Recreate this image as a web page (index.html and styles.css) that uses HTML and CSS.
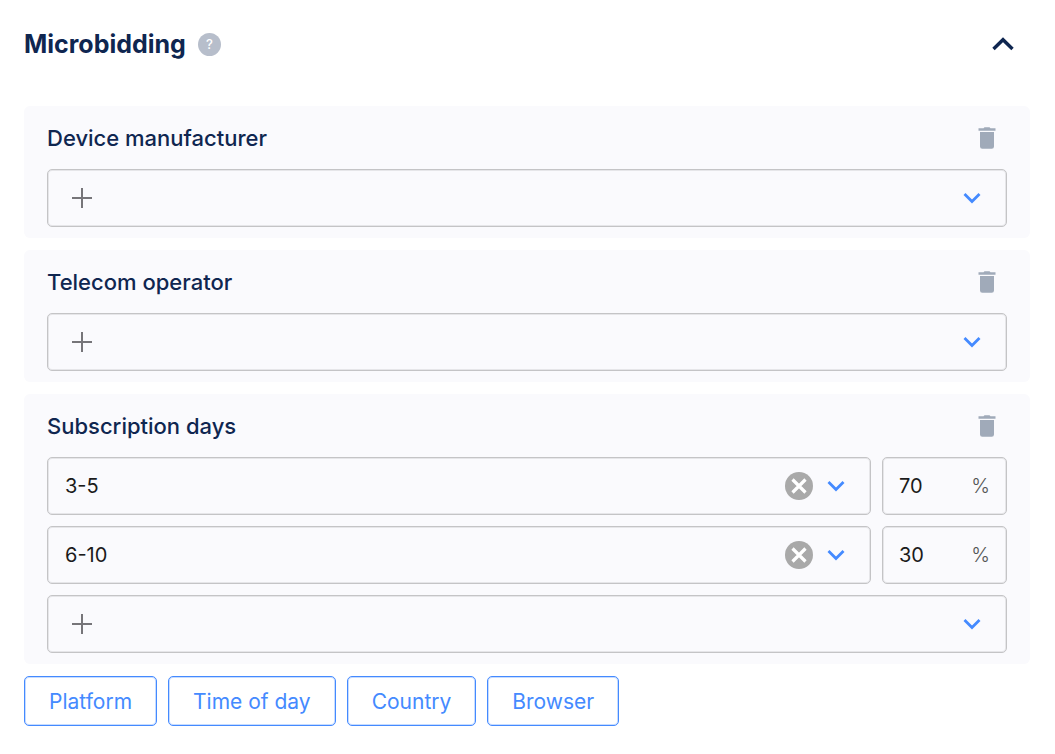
FILE: index.html
```html
<!DOCTYPE html>
<html lang="en">
<head>
    <meta charset="UTF-8">
    <meta name="viewport" content="width=device-width, initial-scale=1.0">
    <title>Microbidding</title>
    <link rel="stylesheet" href="styles.css">
</head>
<body>
    <!-- Shared icons -->
    <svg class="sprite" aria-hidden="true">
        <symbol id="icon-chevron" viewBox="0 0 18 12">
            <path d="M1.500 2l7.500 7.500L16.500 2" fill="none" stroke="currentColor" stroke-width="2.800"/>
        </symbol>
        <symbol id="icon-plus" viewBox="0 0 20 20">
            <path d="M10 0v20M0 10h20" fill="none" stroke="currentColor" stroke-width="2"/>
        </symbol>
        <symbol id="icon-trash" viewBox="0 0 18 22">
            <path d="M.5 1.200h5l1-1h5l1 1h5v2.600H.5zM2 5h14v14.500a2.300 2.300 0 0 1-2.300 2.300H4.300A2.300 2.300 0 0 1 2 19.500z" fill="currentColor"/>
        </symbol>
        <symbol id="icon-clear" viewBox="0 0 28 28">
            <circle cx="14" cy="14" r="14" fill="#a9a9a9"/>
            <path d="M7.500 7.500l13 13M20.500 7.500l-13 13" fill="none" stroke="#fff" stroke-width="3.200"/>
        </symbol>
    </svg>

    <main class="microbidding">
        <header class="section-header">
            <h1>Microbidding</h1>
            <button type="button" class="help" aria-label="Help">?</button>
            <button type="button" class="icon-button collapse" aria-label="Collapse">
                <svg viewBox="0 0 22 14"><path d="M1.500 12L11 2.700l9.500 9.300" fill="none" stroke="currentColor" stroke-width="3.400"/></svg>
            </button>
        </header>

        <div class="cards">
            <section class="card">
                <div class="card-header">
                    <h2><label for="manufacturer">Device manufacturer</label></h2>
                    <button type="button" class="icon-button trash" aria-label="Delete"><svg><use href="#icon-trash"/></svg></button>
                </div>
                <div class="field field-add">
                    <svg class="plus"><use href="#icon-plus"/></svg>
                    <select id="manufacturer"><option></option></select>
                    <svg class="chevron"><use href="#icon-chevron"/></svg>
                </div>
            </section>

            <section class="card">
                <div class="card-header">
                    <h2><label for="operator">Telecom operator</label></h2>
                    <button type="button" class="icon-button trash" aria-label="Delete"><svg><use href="#icon-trash"/></svg></button>
                </div>
                <div class="field field-add">
                    <svg class="plus"><use href="#icon-plus"/></svg>
                    <select id="operator"><option></option></select>
                    <svg class="chevron"><use href="#icon-chevron"/></svg>
                </div>
            </section>

            <section class="card">
                <div class="card-header">
                    <h2><label for="days">Subscription days</label></h2>
                    <button type="button" class="icon-button trash" aria-label="Delete"><svg><use href="#icon-trash"/></svg></button>
                </div>
                <div class="rows">
                    <div class="row">
                        <div class="field">
                            <select aria-label="Subscription days"><option>3-5</option></select>
                            <button type="button" class="icon-button clear" aria-label="Clear"><svg><use href="#icon-clear"/></svg></button>
                            <svg class="chevron"><use href="#icon-chevron"/></svg>
                        </div>
                        <label class="field percent"><input type="text" inputmode="numeric" value="70"><span>%</span></label>
                    </div>
                    <div class="row">
                        <div class="field">
                            <select aria-label="Subscription days"><option>6-10</option></select>
                            <button type="button" class="icon-button clear" aria-label="Clear"><svg><use href="#icon-clear"/></svg></button>
                            <svg class="chevron"><use href="#icon-chevron"/></svg>
                        </div>
                        <label class="field percent"><input type="text" inputmode="numeric" value="30"><span>%</span></label>
                    </div>
                    <div class="field field-add">
                        <svg class="plus"><use href="#icon-plus"/></svg>
                        <select id="days"><option></option></select>
                        <svg class="chevron"><use href="#icon-chevron"/></svg>
                    </div>
                </div>
            </section>
        </div>

        <div class="dimensions">
            <button type="button">Platform</button>
            <button type="button">Time of day</button>
            <button type="button">Country</button>
            <button type="button">Browser</button>
        </div>
    </main>
</body>
</html>
```

FILE: styles.css
```css
* {
    box-sizing: border-box;
}

body {
    margin: 0;
    background-color: #fff;
    color: #0f2650;
    font-family: Inter, sans-serif;
    font-size: 20px;
}

button,
select,
input {
    font: inherit;
    margin: 0;
}

button {
    cursor: pointer;
}

svg {
    display: block;
    flex: none;
}

.sprite {
    display: none;
}

.microbidding {
    padding: 24px 25px 24px 24px;
}

.section-header {
    display: flex;
    align-items: center;
    height: 40px;
    margin-bottom: 42px;
    padding-right: 16px;
}

h1 {
    margin: 0;
    font-size: 25px;
    font-weight: 700;
}

h2 {
    margin: 0;
    font-size: 22px;
    font-weight: 500;
}

.help {
    width: 23px;
    height: 23px;
    margin-left: 12px;
    padding: 0;
    border: none;
    border-radius: 50%;
    background-color: #b7becb;
    color: #fff;
    font-size: 13px;
    font-weight: 500;
    line-height: 23px;
}

.icon-button {
    flex: none;
    padding: 0;
    border: none;
    background: none;
}

.collapse {
    margin-left: auto;
    color: #0f2650;
}

.collapse svg {
    width: 22px;
    height: 14px;
}

.cards {
    display: grid;
    gap: 12px;
}

.card {
    padding: 0 23px 11px;
    border-radius: 6px;
    background-color: #fafafd;
}

.card-header {
    display: flex;
    align-items: center;
    justify-content: space-between;
    height: 63px;
    padding-right: 11px;
}

.trash {
    color: #a0aab9;
}

.trash svg {
    width: 18px;
    height: 22px;
}

.rows {
    display: grid;
    gap: 11px;
}

.row {
    display: grid;
    grid-template-columns: 1fr 125px;
    gap: 11px;
}

.field {
    display: flex;
    align-items: center;
    min-width: 0;
    height: 58px;
    padding: 0 25px 0 17px;
    border: 1px solid #c4c4c6;
    border-radius: 5px;
    box-shadow: inset 0 0 0 1px #e6e6e9;
}

.field select,
.field input {
    flex: 1;
    min-width: 0;
    width: 100%;
    height: 100%;
    padding: 0;
    border: none;
    outline: none;
    appearance: none;
    background: none;
    color: #1b1b1b;
}

.field-add {
    padding-left: 24px;
}

.plus {
    width: 20px;
    height: 20px;
    color: #767579;
}

.chevron {
    width: 18px;
    height: 12px;
    color: #448aff;
    pointer-events: none;
}

.clear {
    margin-right: 14px;
}

.clear svg {
    width: 28px;
    height: 28px;
}

.percent {
    padding: 0 16px;
}

.percent span {
    color: #555;
    font-weight: 300;
}

.dimensions {
    display: flex;
    flex-wrap: wrap;
    gap: 11px;
    margin-top: 12px;
}

.dimensions button {
    height: 50px;
    padding: 0 24px;
    border: 1px solid #448aff;
    border-radius: 5px;
    background-color: #fff;
    box-shadow: inset 0 0 0 1px #c7dcff;
    color: #448aff;
    font-size: 21px;
}
```
